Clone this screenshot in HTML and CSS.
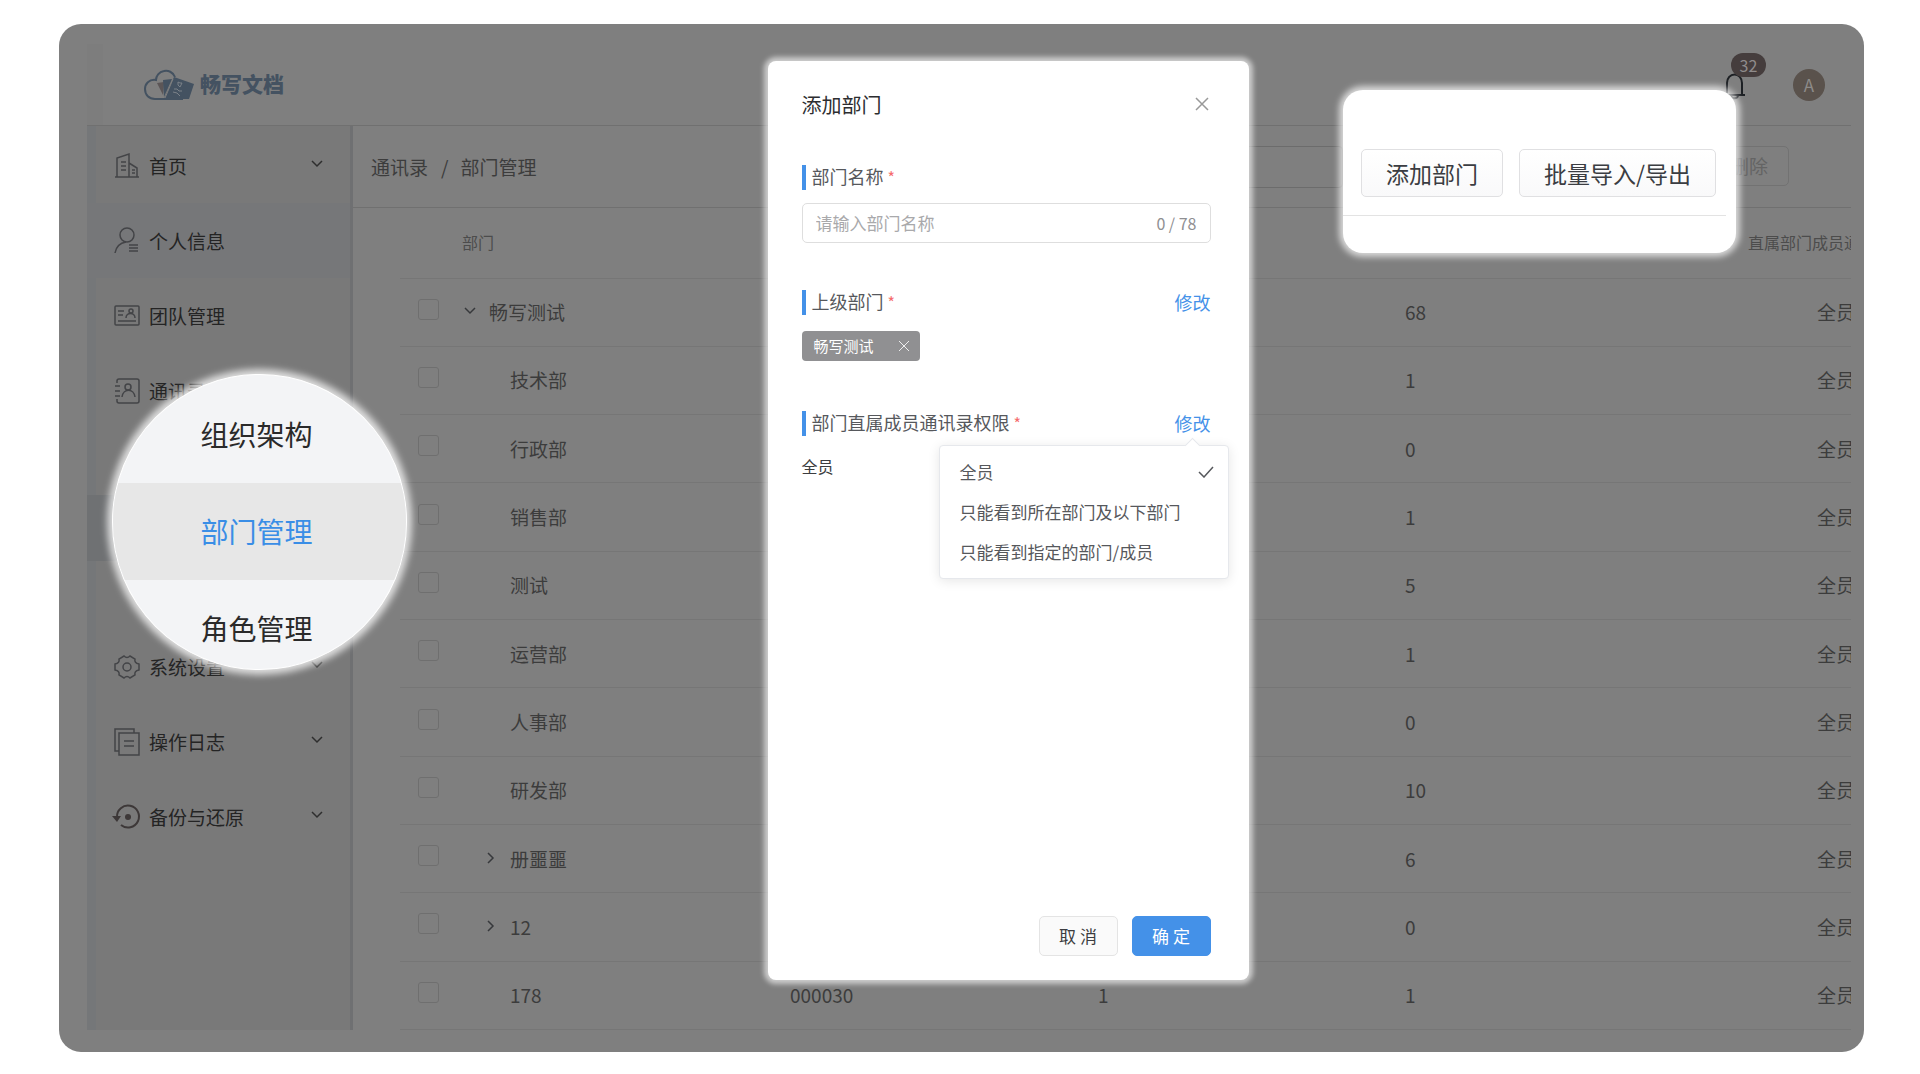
FILE: index.html
```html
<!DOCTYPE html>
<html lang="zh-CN">
<head>
<meta charset="utf-8">
<title>部门管理</title>
<link rel="stylesheet" href="styles.css">
</head>
<body>
<div class="stage">
  <div class="app">
    <header class="topbar">
      <a class="brand" href="#">
        <svg class="brand-mark" width="52" height="32" viewBox="0 0 52 32" aria-hidden="true">
          <path d="M32 8C30 3 25 1 21 2c-5 1-8 5-8 9C6 10 2 15 2 20c0 6 4 10 10 10h28" fill="none" stroke="#445261" stroke-width="2"/>
          <path d="M14 14l6 12 1-13z" fill="#5c5657"/>
          <path d="M20 11l9-1-8 18z" fill="#445261"/>
          <path d="M31 8l20 7-5 15H21z" fill="#445261"/>
          <path d="M30 10l-8 19" fill="none" stroke="#7f7f7f"/>
          <path d="M35 13l2 1 2 0-2 4-2-2zM31 20l3 0 2 2 3 0M30 23l4 1 3 3" fill="none" stroke="#7b8188"/>
        </svg>
        <span>畅写文档</span>
      </a>
      <div class="account">
        <button class="bell" aria-label="通知">
          <svg width="22" height="28" viewBox="0 0 22 28" fill="none" stroke="#1d2024" stroke-width="2">
            <path d="M1 23h20M3 23V11a7 8 0 0 1 15 0v12M7 24c1 3 6 3 7 0"/>
          </svg>
          <span class="badge">32</span>
        </button>
        <span class="avatar">A</span>
      </div>
    </header>

    <div class="body">
      <nav class="sidebar">
        <a class="nav-item" href="#">
          <svg class="nav-icon" viewBox="0 0 26 28"><path d="M1 25h24M3 25V6l12-4v23M15 11l8 5v9M7 10h5M7 14h5M7 18h5M18 18h3M18 21h3"/></svg>
          <span>首页</span>
          <svg class="caret" viewBox="0 0 12 8"><path d="M1 1l5 5 5-5"/></svg>
        </a>
        <a class="nav-item tinted" href="#">
          <svg class="nav-icon" viewBox="0 0 26 28"><circle cx="13" cy="8" r="7"/><path d="M1 26c1-6 5-10 11-11M15 18h9M15 21h9M15 24h9"/></svg>
          <span>个人信息</span>
        </a>
        <a class="nav-item" href="#">
          <svg class="nav-icon" viewBox="0 0 26 28"><rect x="1" y="4" width="24" height="19" rx="1"/><path d="M4 9h6M4 13h5M4 19h18M12 16c0-6 9-6 9 0"/><circle cx="17" cy="9" r="2"/></svg>
          <span>团队管理</span>
        </a>
        <a class="nav-item" href="#">
          <svg class="nav-icon" viewBox="0 0 26 28"><path d="M3 6V4q0-2 2-2h18q2 0 2 2v20q0 2-2 2H5q-2 0-2-2v-2M1 9h5M1 14h5M1 19h5M8 20c1-9 12-9 13 0"/><circle cx="14" cy="10" r="3"/></svg>
          <span>通讯录</span>
        </a>
        <div class="submenu">
          <ul class="lens">
            <li><a href="#">组织架构</a></li>
            <li class="current"><a href="#">部门管理</a></li>
            <li><a href="#">角色管理</a></li>
          </ul>
        </div>
        <a class="nav-item" href="#">
          <svg class="nav-icon" viewBox="0 0 26 28"><path d="M10 3q3 3 6 0l5 3q-1 4 4 5v6q-5 1-4 5l-5 3q-3-3-6 0l-5-3q1-4-4-5v-6q5-1 4-5z"/><circle cx="13" cy="14" r="4"/></svg>
          <span>系统设置</span>
          <svg class="caret" viewBox="0 0 12 8"><path d="M1 1l5 5 5-5"/></svg>
        </a>
        <a class="nav-item" href="#">
          <svg class="nav-icon" viewBox="0 0 26 28"><path d="M5 23H1V1h19v4M5 5h20v22H5zM10 13h10M10 18h10"/></svg>
          <span>操作日志</span>
          <svg class="caret" viewBox="0 0 12 8"><path d="M1 1l5 5 5-5"/></svg>
        </a>
        <a class="nav-item" href="#">
          <svg class="nav-icon thick" viewBox="0 0 26 28"><path d="M3 14a11 11 0 1 1 4 8"/><path class="solid" d="M-2 13h9l-4 6z"/><circle class="solid" cx="14" cy="14" r="3"/></svg>
          <span>备份与还原</span>
          <svg class="caret" viewBox="0 0 12 8"><path d="M1 1l5 5 5-5"/></svg>
        </a>
      </nav>

      <main class="main">
        <div class="toolbar">
          <div class="crumbs"><a href="#">通讯录</a><span class="slash">/</span><span>部门管理</span></div>
          <div class="tools">
            <input class="search" type="text" aria-label="搜索">
            <button class="delete" disabled>删除</button>
          </div>
        </div>
        <div class="table-wrap">
          <table>
            <colgroup><col class="c-check"><col class="c-name"><col class="c-code"><col class="c-num"><col><col class="c-scope"></colgroup>
            <thead>
              <tr><td></td><th scope="col">部门</th><td></td><td></td><td></td><th scope="col" class="scope">直属部门成员通讯录权限</th></tr>
            </thead>
            <tbody>
              <tr><td class="pick"><input type="checkbox" aria-label="畅写测试"></td><td><div class="node root"><button class="toggle" aria-label="收起"><svg viewBox="0 0 12 8" width="12" height="8"><path d="M1 1l5 5 5-5"/></svg></button>畅写测试</div></td><td></td><td></td><td>68</td><td class="scope">全员</td></tr>
              <tr><td class="pick"><input type="checkbox" aria-label="技术部"></td><td><div class="node leaf">技术部</div></td><td></td><td></td><td>1</td><td class="scope">全员</td></tr>
              <tr><td class="pick"><input type="checkbox" aria-label="行政部"></td><td><div class="node leaf">行政部</div></td><td></td><td></td><td>0</td><td class="scope">全员</td></tr>
              <tr><td class="pick"><input type="checkbox" aria-label="销售部"></td><td><div class="node leaf">销售部</div></td><td></td><td></td><td>1</td><td class="scope">全员</td></tr>
              <tr><td class="pick"><input type="checkbox" aria-label="测试"></td><td><div class="node leaf">测试</div></td><td></td><td></td><td>5</td><td class="scope">全员</td></tr>
              <tr><td class="pick"><input type="checkbox" aria-label="运营部"></td><td><div class="node leaf">运营部</div></td><td></td><td></td><td>1</td><td class="scope">全员</td></tr>
              <tr><td class="pick"><input type="checkbox" aria-label="人事部"></td><td><div class="node leaf">人事部</div></td><td></td><td></td><td>0</td><td class="scope">全员</td></tr>
              <tr><td class="pick"><input type="checkbox" aria-label="研发部"></td><td><div class="node leaf">研发部</div></td><td></td><td></td><td>10</td><td class="scope">全员</td></tr>
              <tr><td class="pick"><input type="checkbox" aria-label="册噩噩"></td><td><div class="node child"><button class="toggle" aria-label="展开"><svg viewBox="0 0 8 12" width="8" height="12"><path d="M1 1l5 5-5 5"/></svg></button>册噩噩</div></td><td></td><td></td><td>6</td><td class="scope">全员</td></tr>
              <tr><td class="pick"><input type="checkbox" aria-label="12"></td><td><div class="node child"><button class="toggle" aria-label="展开"><svg viewBox="0 0 8 12" width="8" height="12"><path d="M1 1l5 5-5 5"/></svg></button>12</div></td><td></td><td></td><td>0</td><td class="scope">全员</td></tr>
              <tr><td class="pick"><input type="checkbox" aria-label="178"></td><td><div class="node leaf">178</div></td><td>000030</td><td>1</td><td>1</td><td class="scope">全员</td></tr>
            </tbody>
          </table>
        </div>
      </main>
    </div>
  </div>

  <section class="actions-card">
    <div class="actions">
      <button>添加部门</button>
      <button>批量导入/导出</button>
    </div>
  </section>

  <section class="modal" role="dialog" aria-labelledby="dlg-title">
    <div class="modal-head">
      <h2 id="dlg-title">添加部门</h2>
      <button class="close" aria-label="关闭"><svg width="14" height="14" viewBox="0 0 14 14"><path d="M1 1l12 12M13 1L1 13"/></svg></button>
    </div>

    <div class="field name">
      <div class="field-head"><label for="dept">部门名称<em>*</em></label></div>
      <div class="textbox">
        <input id="dept" type="text" placeholder="请输入部门名称">
        <span class="count">0 / 78</span>
      </div>
    </div>

    <div class="field parent">
      <div class="field-head"><h3>上级部门<em>*</em></h3><a href="#">修改</a></div>
      <span class="tag">畅写测试<button aria-label="移除"><svg width="10" height="10" viewBox="0 0 10 10"><path d="M0 0l10 10M10 0L0 10"/></svg></button></span>
    </div>

    <div class="field access">
      <div class="field-head"><h3>部门直属成员通讯录权限<em>*</em></h3><a href="#">修改</a></div>
      <p class="value">全员</p>
      <ul class="popup">
        <li><span>全员</span><svg width="16" height="12" viewBox="0 0 16 12"><path d="M1 6l5 5 9-10"/></svg></li>
        <li>只能看到所在部门及以下部门</li>
        <li>只能看到指定的部门/成员</li>
      </ul>
    </div>

    <div class="modal-foot">
      <button>取 消</button>
      <button class="primary">确 定</button>
    </div>
  </section>
</div>
</body>
</html>
```
FILE: styles.css
```css
* { box-sizing: border-box; }

body {
  margin: 0;
  background: #fff;
  color: #2b2d30;
  font: 19px/28px "Noto Sans CJK SC", "Noto Sans", sans-serif;
}
a { color: inherit; text-decoration: none; }
button, input { font: inherit; color: inherit; margin: 0; padding: 0; }
button { background: none; border: 0; }
ul, h2, h3, p { margin: 0; padding: 0; list-style: none; font-weight: 400; }
em { font-style: normal; }
svg { flex: none; }

.stage {
  position: relative;
  margin: 24px 56px 22px 59px;
  padding: 20px 13px 22px 28px;
  background: #7f7f7f;
  border-radius: 22px;
}

/* top bar */
.topbar {
  display: flex;
  justify-content: space-between;
  height: 82px;
  padding: 0 26px 0 56px;
  border-bottom: 1px solid #707070;
  background: linear-gradient(90deg, #7d7d7d 16px, transparent 16px);
}
.brand { display: flex; align-items: center; gap: 5px; color: #445261; font-size: 21px; font-weight: 900; }
.brand span { padding-bottom: 3px; }
.account { display: flex; align-items: center; gap: 47px; }
.bell { position: relative; display: flex; padding-top: 2px; }
.badge {
  position: absolute;
  left: 7px;
  top: -17px;
  width: 35px;
  border-radius: 12px;
  background: #453d3d;
  color: #8f8b8b;
  font-size: 16px;
  line-height: 24px;
}
.avatar {
  width: 32px;
  border-radius: 50%;
  background: #5a524c;
  color: #8d8b89;
  font-size: 17px;
  line-height: 32px;
  text-align: center;
}

.body { display: flex; }

/* sidebar */
.sidebar {
  flex: none;
  width: 266px;
  padding-top: 2px;
  border-right: 3px solid #6f7072;
  background: linear-gradient(90deg, #757779 9px, #797979 9px);
}
.nav-item {
  display: flex;
  align-items: center;
  height: 75px;
  padding: 0 27px 0 27px;
  color: #242424;
}
.nav-item.tinted { background: #767779; }
.nav-item span { flex: 1; padding-left: 9px; }
.nav-icon { width: 26px; height: 28px; overflow: visible; fill: none; stroke: #434447; stroke-width: 1.5; }
.nav-icon.thick { stroke: #3d3838; stroke-width: 2; }
.nav-icon .solid { fill: #3d3838; stroke: none; }
.caret { width: 12px; height: 8px; margin-bottom: 4px; fill: none; stroke: #2e2e2e; stroke-width: 1.5; }

.submenu {
  position: relative;
  height: 201px;
  background: linear-gradient(transparent 67px, #6f7173 67px, #6f7173 133px, transparent 133px);
}
.lens {
  position: absolute;
  z-index: 2;
  left: 25px;
  top: -54px;
  width: 295px;
  height: 296px;
  padding-top: 11px;
  border-radius: 50%;
  border: 1px solid #fff;
  overflow: hidden;
  background: #f3f4f6;
  box-shadow: 0 0 7px 5px rgba(255, 255, 255, .75);
  color: #2a2a2a;
  font-size: 28px;
  text-align: center;
}
.lens li { height: 97px; padding-right: 6px; line-height: 96px; }
.lens .current { background: #e7e7e7; color: #3a8ee6; }

/* main */
.main { flex: 1; min-width: 0; overflow: hidden; color: #3c3c3c; }
.toolbar {
  display: flex;
  align-items: center;
  justify-content: space-between;
  height: 82px;
  padding: 10px 62px 10px 18px;
  border-bottom: 1px solid #707070;
}
.crumbs { display: flex; }
.slash { padding: 0 12px 0 13px; }
.tools { display: flex; gap: 366px; }
.search { width: 150px; height: 42px; border: 1px solid #6c6c6c; border-radius: 4px; background: none; }
.delete { width: 80px; height: 40px; border: 1px solid #727272; border-radius: 5px; color: #646464; }

.table-wrap { padding-left: 47px; }
table {
  width: calc(100% + 135px);
  height: 822px;
  border-collapse: collapse;
  table-layout: fixed;
}
.c-check { width: 62px; }
.c-name { width: 328px; }
.c-code { width: 308px; }
.c-num { width: 307px; }
.c-scope { width: 300px; }
td, th { height: 68px; padding: 0; border-bottom: 1px solid #767676; text-align: left; font-weight: 400; }
thead td, thead th { height: 70px; padding-bottom: 2px; font-size: 16px; color: #4c4c4c; }
td.scope, th.scope { text-align: center; }
.pick { padding: 0 0 6px 18px; line-height: 0; }
.pick input {
  appearance: none;
  width: 21px;
  height: 21px;
  border: 1px solid #6f6f6f;
  border-radius: 3px;
}
.node { display: flex; align-items: center; }
.node.child { padding-left: 21px; }
.node.leaf { padding-left: 48px; }
.toggle { display: flex; align-items: center; justify-content: center; width: 27px; height: 20px; padding-right: 11px; }
.toggle svg { margin-bottom: 2px; fill: none; stroke: #37393c; stroke-width: 1.5; }

/* highlighted actions */
.actions-card {
  position: absolute;
  z-index: 2;
  right: 128px;
  top: 66px;
  width: 393px;
  height: 163px;
  padding: 59px 10px 0 0;
  border-radius: 20px;
  background: #fff;
  box-shadow: 0 0 6px 4px rgba(255, 255, 255, .7);
}
.actions { display: flex; gap: 16px; padding: 0 0 18px 18px; border-bottom: 1px solid #e3e3e3; }
.actions button {
  height: 48px;
  padding: 0 24px;
  border: 1px solid #e0e0e2;
  border-radius: 5px;
  background: linear-gradient(#fff, #f9f9fa);
  color: #3b3d42;
  font-size: 23px;
  white-space: nowrap;
}

/* dialog */
.modal {
  position: absolute;
  z-index: 3;
  left: calc(50% - 194px);
  top: 37px;
  display: flex;
  flex-direction: column;
  width: 481px;
  height: 919px;
  padding: 30px 38px 24px 34px;
  border-radius: 8px;
  background: #fff;
  box-shadow: 0 0 5px 4px rgba(255, 255, 255, .6);
  color: #56585c;
  font-size: 18px;
}
.modal-head { display: flex; justify-content: space-between; align-items: center; }
.modal h2 { color: #2c2d30; font-size: 20px; }
.modal h3 { font-size: 18px; }
.close { display: flex; padding: 0 2px 2px 0; }
.close svg { fill: none; stroke: #999; stroke-width: 1.5; }
.field-head { display: flex; justify-content: space-between; }
.field-head label, .field-head h3 { padding-left: 6px; border-left: 4px solid #4491e8; line-height: 22px; height: 25px; }
.field-head em { padding-left: 4px; color: #f56c6c; font-size: 16px; line-height: 16px; }
.field-head a { color: #4491e8; line-height: 24px; }
.field.name { margin-top: 46px; }
.field.parent { margin-top: 47px; }
.field.access { position: relative; margin-top: 50px; }
.textbox {
  display: flex;
  align-items: center;
  height: 40px;
  margin-top: 13px;
  padding: 0 13px;
  border: 1px solid #dedede;
  border-radius: 5px;
}
.textbox input { flex: 1; min-width: 0; border: 0; outline: 0; background: none; font-size: 17px; }
.textbox input::placeholder { color: #a9a9ab; }
.count { color: #8f8f92; font-size: 16px; }
.tag {
  display: flex;
  align-items: center;
  justify-content: space-between;
  width: 118px;
  height: 30px;
  margin-top: 16px;
  padding: 0 11px 0 12px;
  border-radius: 4px;
  background: #909092;
  color: #fff;
  font-size: 15px;
}
.tag button { display: flex; }
.tag svg { fill: none; stroke: #eee; overflow: visible; }
.value { margin-top: 16px; color: #3c3d40; font-size: 16px; }

.popup {
  position: absolute;
  right: -18px;
  top: 34px;
  width: 290px;
  padding: 6px 14px 6px 20px;
  border: 1px solid #e6e8ec;
  border-radius: 4px;
  background: #fff;
  box-shadow: 0 2px 12px rgba(0, 0, 0, .1);
  font-size: 17px;
  line-height: 40px;
  white-space: nowrap;
}
.popup::before {
  content: "";
  position: absolute;
  right: 30px;
  top: -6px;
  width: 10px;
  height: 10px;
  border: solid #e6e8ec;
  border-width: 1px 0 0 1px;
  background: #fff;
  transform: rotate(45deg);
}
.popup li { display: flex; justify-content: space-between; align-items: center; height: 40px; }
.popup svg { fill: none; stroke: #56585c; stroke-width: 1.5; }

.modal-foot { display: flex; justify-content: flex-end; gap: 14px; margin-top: auto; }
.modal-foot button {
  width: 79px;
  height: 40px;
  border: 1px solid #e4e4e4;
  border-radius: 5px;
  background: #fafafa;
  color: #3c3d40;
  font-size: 17px;
}
.modal-foot .primary { border-color: #4491e8; background: #4491e8; color: #fff; }
```
